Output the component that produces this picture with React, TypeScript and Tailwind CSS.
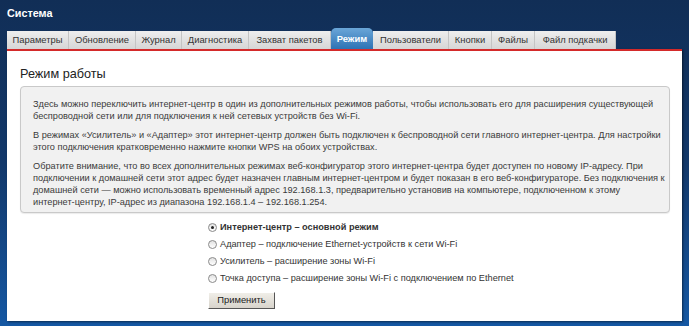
import { useState } from 'react';

const tabs = [
  { label: 'Параметры', w: 62 },
  { label: 'Обновление', w: 67 },
  { label: 'Журнал', w: 46 },
  { label: 'Диагностика', w: 67 },
  { label: 'Захват пакетов', w: 82 },
  { label: 'Режим', w: 42, active: true },
  { label: 'Пользователи', w: 76 },
  { label: 'Кнопки', w: 43 },
  { label: 'Файлы', w: 43 },
  { label: 'Файл подкачки', w: 81 },
];

const modes = [
  'Интернет-центр – основной режим',
  'Адаптер – подключение Ethernet-устройств к сети Wi-Fi',
  'Усилитель – расширение зоны Wi-Fi',
  'Точка доступа – расширение зоны Wi-Fi с подключением по Ethernet',
];

export default function App() {
  const [mode, setMode] = useState(0);

  return (
    <div className="w-[689px] h-[326px] overflow-hidden bg-gradient-to-b from-[#112e56] via-[#12386a] to-[#1558a3] font-['Liberation_Sans',Arial,sans-serif] text-[#333]">
      {/* Header */}
      <div className="px-[7px] pt-[5px] h-[27px] text-[10.8px] font-bold text-white">Система</div>

      {/* Tabs */}
      <div className="flex items-end pl-[7px] h-[22px]">
        {tabs.map(t =>
          t.active ? (
            <div
              key={t.label}
              style={{ width: t.w }}
              className="h-[21px] flex items-center justify-center pt-[1px] rounded-t-[5px] bg-gradient-to-b from-[#6aa6d8] to-[#2d73b4] text-white text-[9.4px] font-bold"
            >
              {t.label}
            </div>
          ) : (
            <div
              key={t.label}
              style={{ width: t.w }}
              className="h-[18px] flex items-center justify-center border-r border-[#c4c4c4] bg-gradient-to-b from-[#eeeeee] to-[#d6d6d6] text-[9.4px] text-[#333]"
            >
              {t.label}
            </div>
          )
        )}
      </div>

      {/* Panel */}
      <div className="mx-[7px] w-[675px] h-[272px] bg-white border-t-[2px] border-[#d42a2a] shadow-[1px_1px_2px_rgba(0,0,0,0.5)]">
        <div className="px-[13px]">
          <h2 className="pt-[14px] h-[35px] text-[12.7px] text-[#222]">Режим работы</h2>

          <div className="w-[650px] rounded-[4px] border border-[#c9c9c9] bg-[#f1f1f1] pl-[12px] pr-[3px] pt-[11px] pb-[4px] text-[9.2px] leading-[12px] text-[#3a3a3a] space-y-[7px] shadow-[0_1px_1px_rgba(0,0,0,0.08)]">
            <p>
              Здесь можно переключить интернет-центр в один из дополнительных режимов работы, чтобы использовать его для расширения существующей беспроводной сети или для подключения к ней сетевых устройств без Wi-Fi.
            </p>
            <p>
              В режимах «Усилитель» и «Адаптер» этот интернет-центр должен быть подключен к беспроводной сети главного интернет-центра. Для настройки этого подключения кратковременно нажмите кнопки WPS на обоих устройствах.
            </p>
            <p>
              Обратите внимание, что во всех дополнительных режимах веб-конфигуратор этого интернет-центра будет доступен по новому IP-адресу. При подключении к домашней сети этот адрес будет назначен главным интернет-центром и будет показан в его веб-конфигураторе. Без подключения к домашней сети — можно использовать временный адрес 192.168.1.3, предварительно установив на компьютере, подключенном к этому{' '}
              <span className="whitespace-nowrap">интернет-центру,</span> IP-адрес из диапазона 192.168.1.4 – 192.168.1.254.
            </p>
          </div>

          <div className="pl-[188px] pt-[6px] flex flex-col text-[9.2px] text-[#333]">
            {modes.map((m, i) => (
              <label key={m} className="flex items-center gap-[3px] h-[17px]" onClick={() => setMode(i)}>
                <span className="w-[9px] h-[9px] rounded-full border border-[#8a8a8a] bg-gradient-to-b from-[#e2e2e2] to-white flex items-center justify-center">
                  {mode === i && <span className="w-[3px] h-[3px] rounded-full bg-[#222]" />}
                </span>
                <span className={mode === i ? 'font-bold' : ''}>{m}</span>
              </label>
            ))}
            <div className="pt-[5px]">
              <button className="w-[67px] h-[17px] text-[9.4px] text-[#222] bg-gradient-to-b from-[#f0eee8] to-[#d8d4cc] border border-t-white border-l-white border-r-[#555] border-b-[#555]">
                Применить
              </button>
            </div>
          </div>
        </div>
      </div>
    </div>
  );
}
